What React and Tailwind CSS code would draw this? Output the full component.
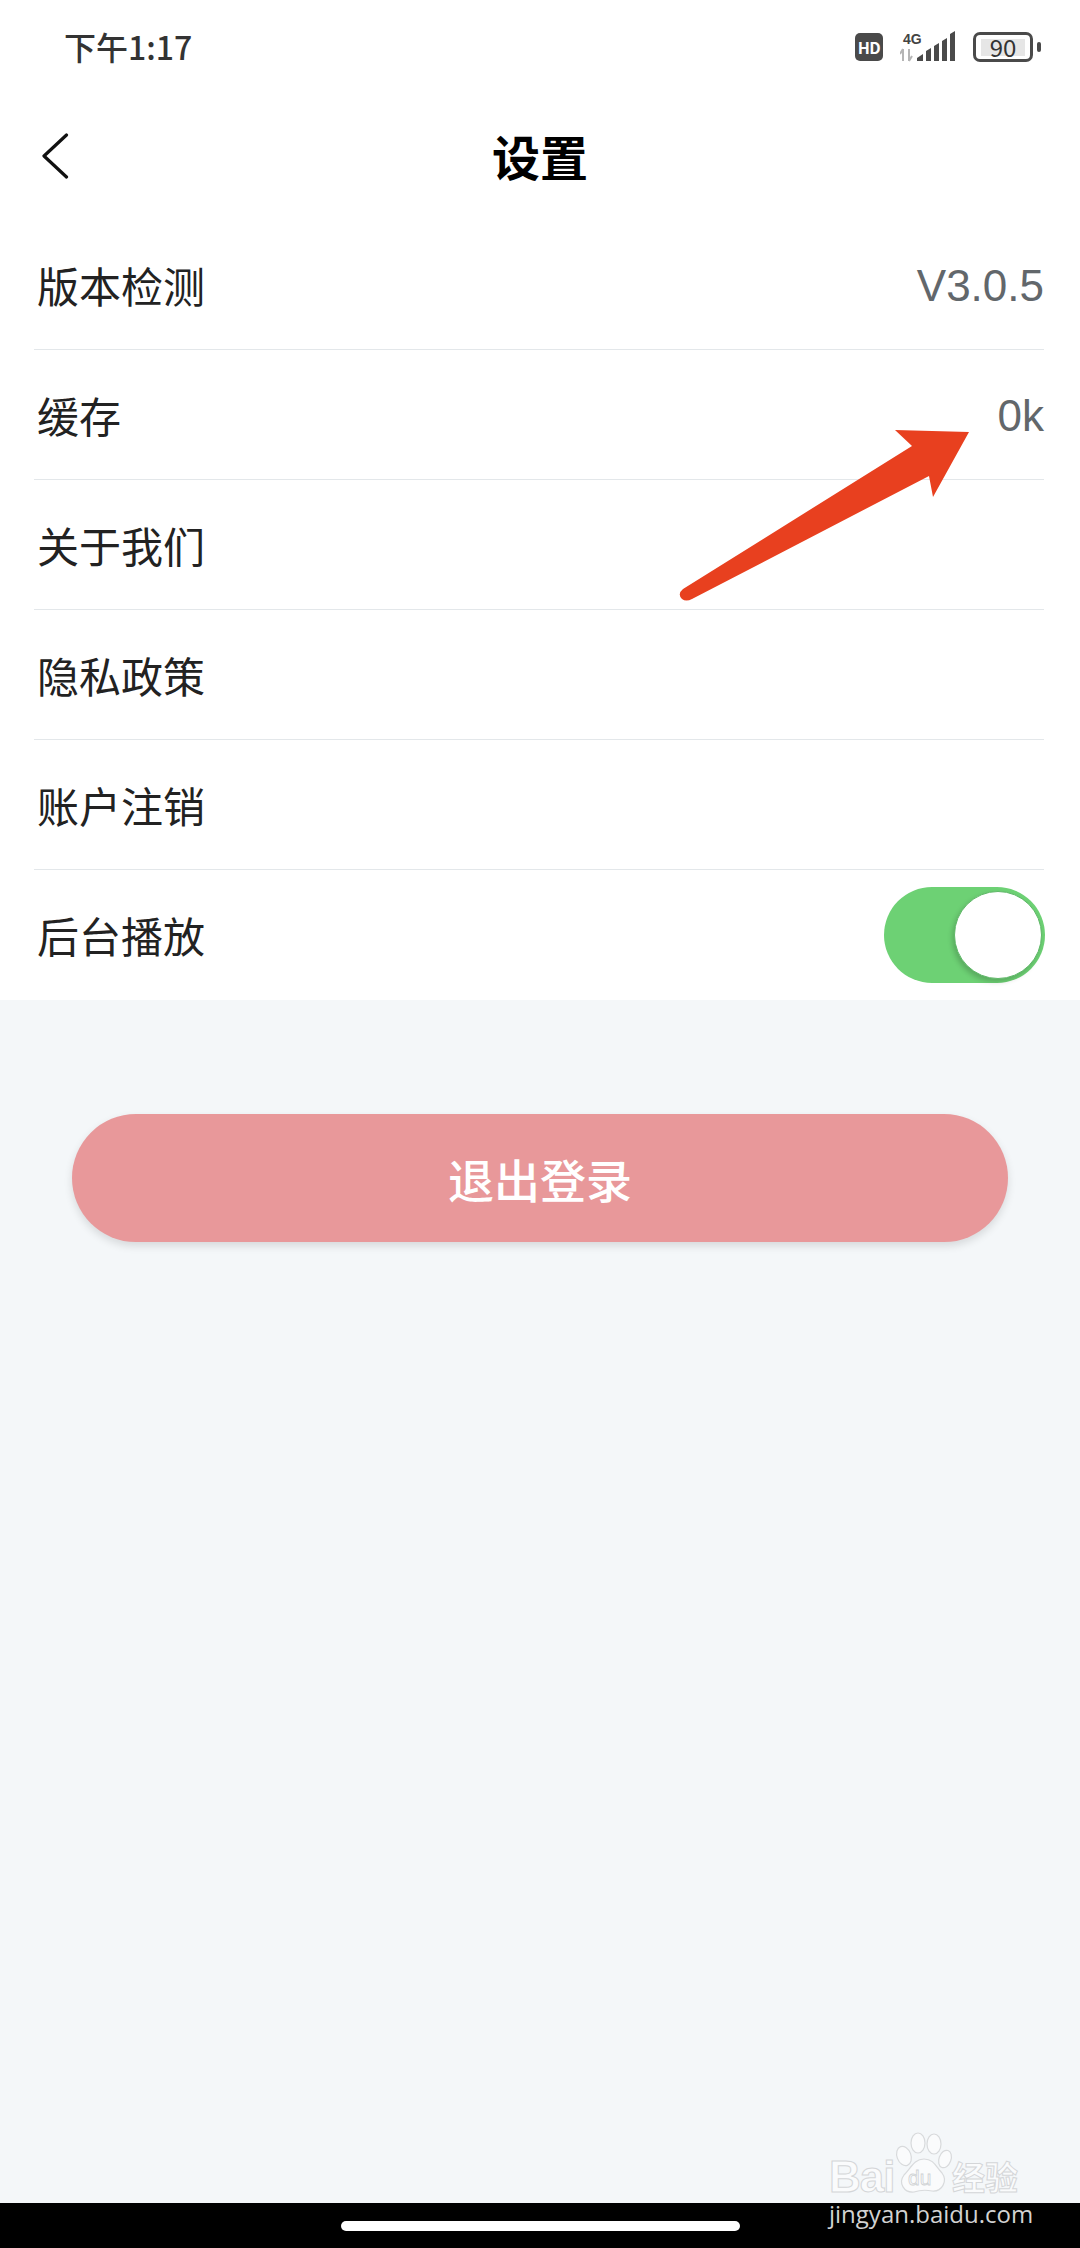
import React from 'react';

const rows = [
  { label: '版本检测', value: 'V3.0.5' },
  { label: '缓存', value: '0k' },
  { label: '关于我们' },
  { label: '隐私政策' },
  { label: '账户注销' },
];

const StatusIcons = () => (
  <div className="flex items-center">
    <div className="w-[28px] h-[28px] rounded-[5px] bg-[#4a4a4a] text-white text-[16px] font-bold leading-[28px] text-center tracking-[-0.5px]">
      HD
    </div>
    <svg width="58" height="32" viewBox="0 0 58 32" className="ml-[17px]">
      <text x="3" y="13" fontSize="14" fontWeight="700" fill="#444" fontFamily="Liberation Sans, sans-serif">4G</text>
      <path d="M3 30V18M3 18l-3 5M9 18v12M9 30l3-5" stroke="#b5b5b5" strokeWidth="2" fill="none" />
      <path d="M17 30v-3l6-4v7zM26 30V20l5-3v13zM34 30V15l5-3v18zM42 30V10l5-3v23zM50 30V3l5-3v30z" fill="#4a4a4a" />
    </svg>
    <div className="ml-[15px] w-[60px] h-[30px] rounded-[7px] border-[3px] border-[#4a4a4a] flex items-center justify-center">
      <div className="w-[44px] h-[17px] bg-[#e6e6e6] flex items-center justify-center text-[24px] leading-none text-[#333]">
        90
      </div>
    </div>
    <div className="ml-[4px] w-[4px] h-[10px] rounded-[2px] bg-[#4a4a4a]" />
  </div>
);

const Toggle = () => (
  <div className="-mr-[1px] w-[161px] h-[96px] rounded-full bg-[#6dd174] flex items-center justify-end pr-[3px]">
    <div className="w-[88px] h-[88px] rounded-full bg-white border border-[#5fb868] shadow-[-2px_3px_5px_rgba(0,0,0,0.18)]" />
  </div>
);

const Row = ({ label, value, last, children }) => (
  <div className={`ml-[34px] mr-[36px] h-[130px] flex items-center justify-between ${last ? '' : 'border-b border-[#e3e7ea]'}`}>
    <span className="ml-[3px] text-[42px] leading-none text-[#222]">{label}</span>
    {value && <span className="mt-[2px] text-[44px] leading-none text-[#62676b] font-['Liberation_Sans',sans-serif]">{value}</span>}
    {children}
  </div>
);

export default function App() {
  return (
    <div className="relative w-[1080px] h-[2248px] overflow-hidden flex flex-col bg-[#f4f7f9] font-['Noto_Sans_CJK_SC','Liberation_Sans',sans-serif]">
      <section className="bg-white h-[1000px]">
        <div className="h-[96px] pl-[64px] pr-[39px] pt-[31px] flex items-start justify-between">
          <span className="-mt-[1px] text-[32px] leading-[33px] font-medium text-[#333]">下午1:17</span>
          <StatusIcons />
        </div>
        <div className="relative h-[124px] flex items-start justify-center">
          <svg className="absolute left-[40px] top-[37px]" width="30" height="46" viewBox="0 0 30 46" fill="none">
            <path d="M26.5 2L4 23L26.5 44" stroke="#111" strokeWidth="3.2" strokeLinecap="round" strokeLinejoin="round" />
          </svg>
          <h1 className="mt-[35px] text-[48px] leading-none font-bold text-black">设置</h1>
        </div>
        {rows.map((r) => (
          <Row key={r.label} label={r.label} value={r.value} />
        ))}
        <Row label="后台播放" last>
          <Toggle />
        </Row>
      </section>

      <main className="flex-1 px-[72px] pt-[114px]">
        <button className="w-full h-[128px] rounded-full bg-[#e8989a] text-white text-[46px] font-medium shadow-[0_4px_8px_rgba(0,0,0,0.12)]">
          退出登录
        </button>
      </main>

      <footer className="h-[45px] bg-black flex justify-center pt-[18px]">
        <div className="w-[399px] h-[10px] rounded-full bg-white" />
      </footer>

      {/* red annotation arrow */}
      <svg className="absolute left-[670px] top-[425px]" width="310" height="185" viewBox="670 425 310 185">
        <path
          d="M969 432L895 430L912 446L683 589Q677 594 682 599Q686 602 692 599L929 476L933 497Z"
          fill="#e8401f"
        />
      </svg>

      {/* baidu watermark */}
      <div className="absolute left-[829px] top-[2130px] w-[200px] h-[100px] text-[#fafbfc]">
        <span className="absolute left-0 top-[25px] text-[44px] leading-[44px] font-bold font-['Liberation_Sans',sans-serif] tracking-[-1px] [-webkit-text-stroke:1px_#d4d6d8]">
          Bai
        </span>
        <svg className="absolute left-[65px] top-[2px]" width="60" height="62" viewBox="0 0 60 62">
          <g fill="#fafbfc" stroke="#d8dadc" strokeWidth="1.2">
            <ellipse cx="10" cy="24" rx="7" ry="10" transform="rotate(-20 10 24)" />
            <ellipse cx="24" cy="11" rx="7" ry="10" />
            <ellipse cx="40" cy="12" rx="7" ry="10" />
            <ellipse cx="51" cy="27" rx="6" ry="9" transform="rotate(20 51 27)" />
            <path d="M30 27C40 27 42 35 48 41C54 49 48 60 38 59C33 58 26 58 20 60C10 61 4 51 10 43C17 36 20 27 30 27Z" />
          </g>
          <text x="14" y="53" fontSize="21" fill="#fafbfc" stroke="#cfd2d4" strokeWidth="0.8" fontFamily="Liberation Sans, sans-serif">du</text>
        </svg>
        <span className="absolute left-[123px] top-[28px] text-[33px] leading-[36px] font-bold [-webkit-text-stroke:1px_#d4d6d8]">
          经验
        </span>
        <span className="absolute left-0 top-[71px] text-[24px] leading-[26px] text-[#d2d2d2] font-['Open_Sans',sans-serif]">
          jingyan.baidu.com
        </span>
      </div>
    </div>
  );
}
